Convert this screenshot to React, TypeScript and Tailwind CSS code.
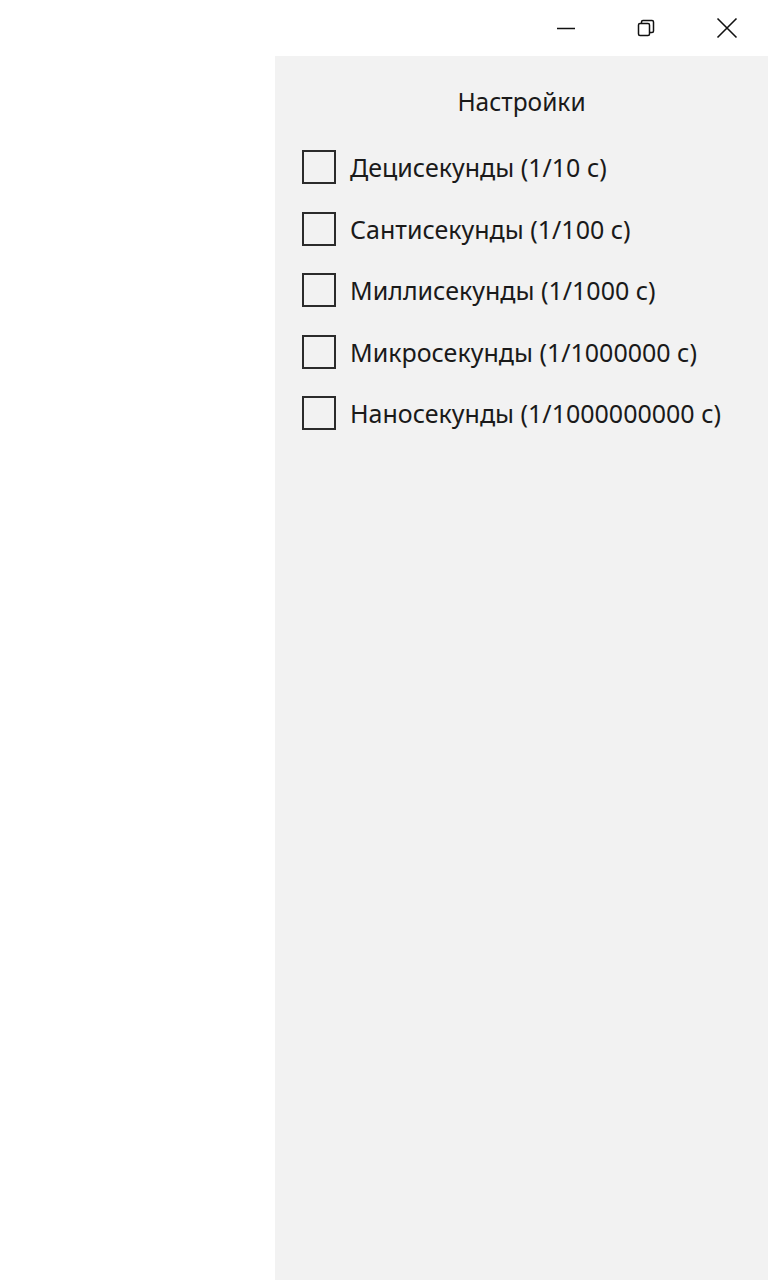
import React from 'react'

const options = [
  'Децисекунды (1/10 с)',
  'Сантисекунды (1/100 с)',
  'Миллисекунды (1/1000 с)',
  'Микросекунды (1/1000000 с)',
  'Наносекунды (1/1000000000 с)',
]

function TitleBar() {
  return (
    <div className="flex h-[56px] justify-end bg-white">
      <button className="flex w-[80px] items-center justify-center text-[#111]">
        <svg width="20" height="20" viewBox="0 0 20 20">
          <path d="M1 10.5h18" stroke="currentColor" strokeWidth="1.5" />
        </svg>
      </button>
      <button className="flex w-[80px] items-center justify-center text-[#111]">
        <svg width="20" height="20" viewBox="0 0 20 20" fill="none" stroke="currentColor" strokeWidth="1.5">
          <rect x="2.5" y="5.5" width="11" height="12" rx="1.5" />
          <path d="M5.5 5.5V4a1.5 1.5 0 0 1 1.5-1.5h9A1.5 1.5 0 0 1 17.5 4v9a1.5 1.5 0 0 1-1.5 1.5h-2.5" />
        </svg>
      </button>
      <button className="flex w-[82px] items-center justify-center text-[#111]">
        <svg width="22" height="22" viewBox="0 0 22 22">
          <path d="M1.5 1.5l19 19M20.5 1.5l-19 19" stroke="currentColor" strokeWidth="1.6" />
        </svg>
      </button>
    </div>
  )
}

export default function App() {
  return (
    <div className="flex h-[1280px] flex-col bg-white font-['Noto_Sans',sans-serif] text-[#1a1a1a]">
      <TitleBar />
      <div className="flex flex-1">
        <div className="w-[275px]" />
        <div className="flex-1 bg-[#f2f2f2] pl-[27px] pt-[29px]">
          <div className="pr-[27px] text-center text-[24.5px] leading-[34px]">Настройки</div>
          <div className="mt-[31px] flex flex-col gap-[27.5px]">
            {options.map((o) => (
              <label key={o} className="flex h-[34px] items-center gap-[14px]">
                <span className="h-[34px] w-[34px] shrink-0 border-[2px] border-[#2b2b2b] bg-transparent" />
                <span className="text-[25px] leading-[34px] whitespace-nowrap">{o}</span>
              </label>
            ))}
          </div>
        </div>
      </div>
    </div>
  )
}
